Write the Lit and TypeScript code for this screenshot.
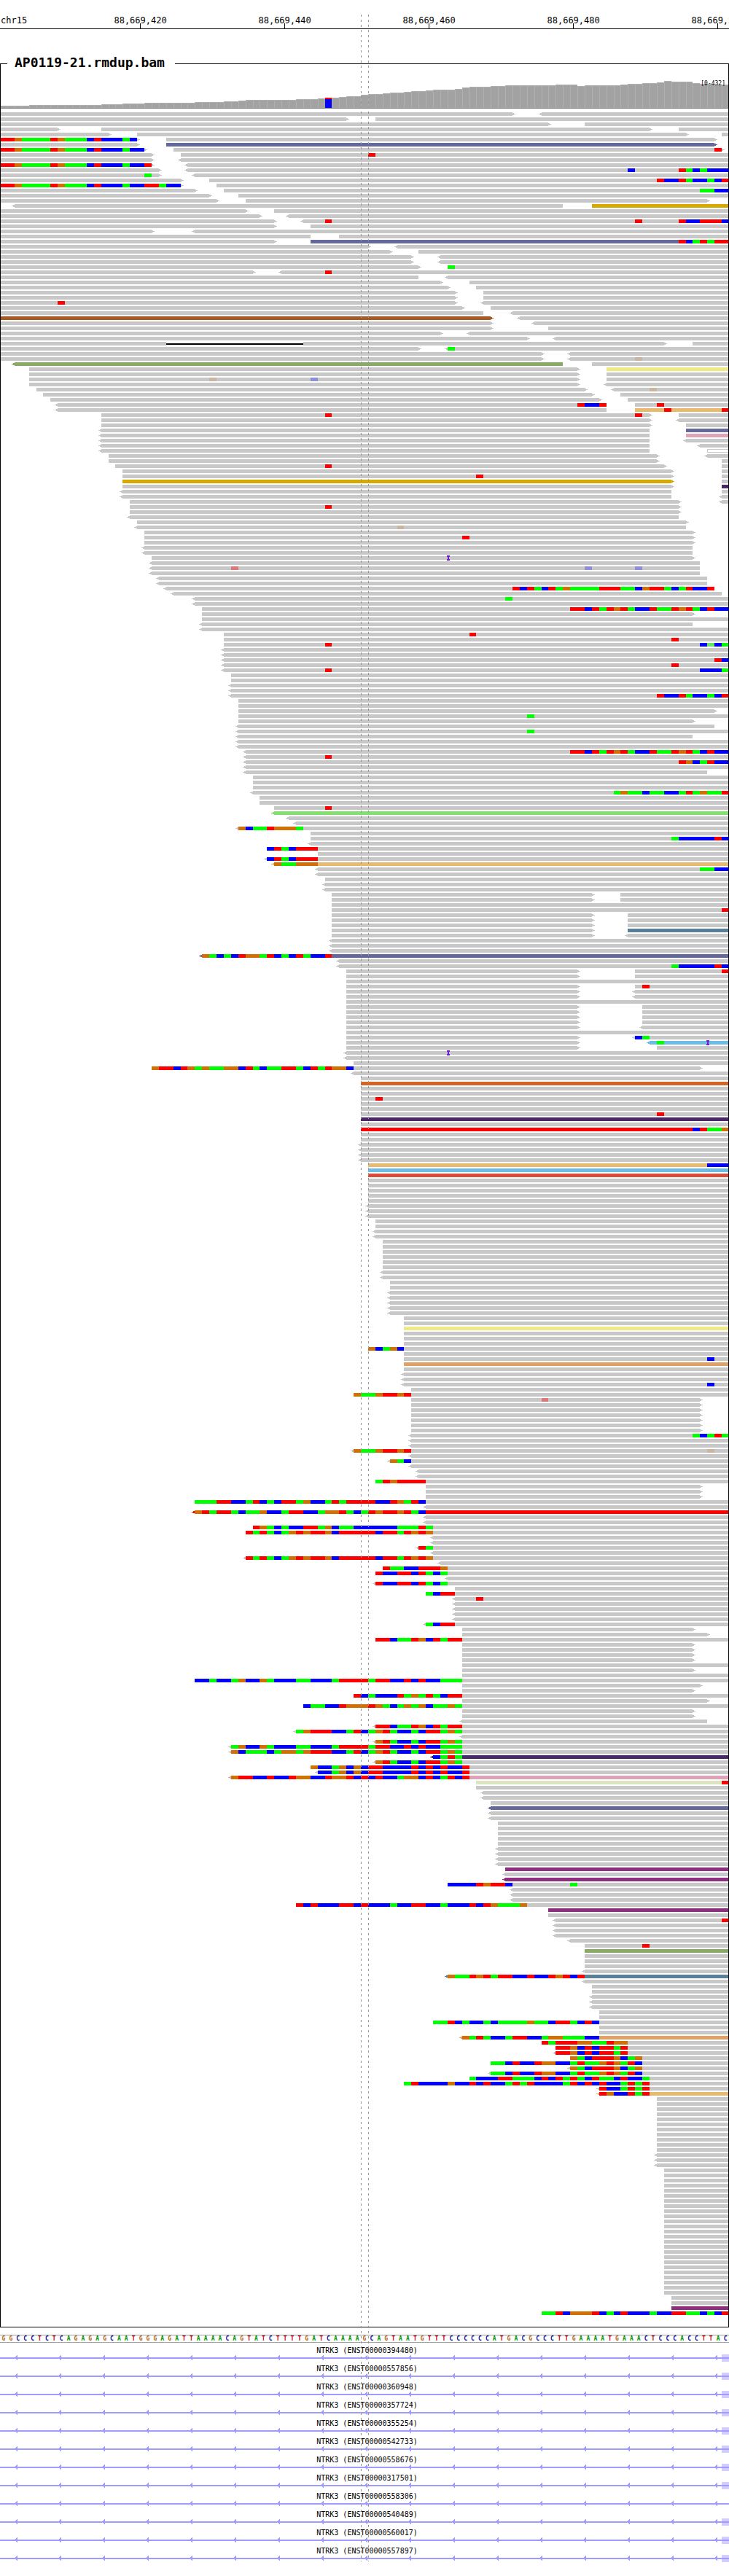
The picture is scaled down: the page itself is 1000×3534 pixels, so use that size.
import { LitElement, html, svg, css } from "lit";
import { customElement, property } from "lit/decorators.js";

const BASES = 101;
const SPAN = 1000;
const FIRST_POSITION = 88669401;

/** Left edge of base column k on a drawing SPAN units wide. */
const edge = (k: number) => Math.round((k * SPAN) / BASES);

/* ---------- data ---------- */

const TICKS = [19, 39, 59, 79, 99].map((base) => ({
  base,
  label: (FIRST_POSITION + base).toLocaleString("en-US"),
}));

const SEQUENCE =
  "GGCCCTCTCAGAGAGCAATGGGAGATTAAAACAGTATCTTTTGATCAAAAGCAGTAATGTTTCCCCCCATGACGCCCTTGAAAATGAAACTCCCACCTTAC";

const TRANSCRIPTS = [
  { id: "ENST00000394480", exon: true },
  { id: "ENST00000557856", exon: true },
  { id: "ENST00000360948", exon: true },
  { id: "ENST00000357724", exon: true },
  { id: "ENST00000355254", exon: true },
  { id: "ENST00000542733", exon: true },
  { id: "ENST00000558676", exon: true },
  { id: "ENST00000317501", exon: true },
  { id: "ENST00000558306", exon: false },
  { id: "ENST00000540489", exon: true },
  { id: "ENST00000560017", exon: true },
  { id: "ENST00000557897", exon: true },
];

/** Coverage as [number of bases, bar height]. */
const COVERAGE: [number, number][] = [
  [4, 3], [10, 4], [3, 5], [3, 6], [7, 7], [4, 8], [2, 9], [1, 10], [7, 11],
  [3, 12], [1, 13], [2, 14], [1, 15], [2, 16], [1, 18], [2, 19], [1, 20],
  [2, 21], [1, 22], [2, 23], [1, 24], [3, 25], [1, 26], [1, 28], [3, 29],
  [2, 30], [7, 31], [3, 32], [1, 30], [5, 31], [1, 32], [2, 33], [2, 34],
  [1, 35], [1, 37], [3, 36], [1, 34], [2, 33], [2, 32],
];
const VARIANT_BASE = 45;

/*
 * One lane per line, in base columns:
 *   [<]from-[to][>][*colour]  a read, with its strand tip; no end = runs off the view
 *   @n:ACGT                   mismatched or clipped bases from column n (lower case = low quality)
 *   !n  insertion     =a-b  deletion     xN  the lane is repeated N times
 */
const LANES = `
0-71> <75-
0-48> 52-
0-76> 81-
0-8> 14-90> 94-
0-15> 19-95> 100-
0-19> @0:TTGAAAATGAAACTCCCAC 23-99>
0-19> 23-99>*slate
0-20> @0:TTGAAAATGAAACTCCCACC 24-100> @99:T
0-21> 25- @51:T
0-21> <25-
0-21> @0:TTGAAAATGAAACTCCCACCT <26-
0-22> <26- @87:C @94:TACACCC
0-22> @20:A <27-
0-25> 29- @91:TCCTACCACT
0-25> @0:TTGAAAATGAAACTCCCACCTTACC 30-
0-27> 31- @97:AACC
0-29> 33-
0-30> 34-98>
<2-78 82-*gold
0-34> 38-
0-36> <40-
0-38> <42- @45:T @88:T @94:TCCTTTC
0-38> 43-
0-21> <27-
0-43 47-
0-38> 43-*slate @94:TCATATT
0-51> <55-
0-54> 58-
0-57> <61- x2
0-58> 62- @62:A
0-35> <39- @45:T
0-58 <62-
0-61> 65-
0-62> 66-
0-63> 67- x2
0-63> <67- @8:T
0-64> 68-
0-67 <71-
0-68>*brown <72-
0-68> <74-
0-68> 76-
0-61> <65-
0-73> <77-
0-23 =23-42 42-92> 96-
0-58> <62- @62:A
0-75> <79-
0-75> <79- @88:g
<2-78*green 82-
4-80> 84-*yellow
4-80> 84-
4-80> 84- @29:g @43:c
4-80> <84-
5-81> <85- @90:g
6-82> 86-
7-83> 87-
<8-84 @80:TCCT 88- @91:T
<8-84 88-*sand @92:T @100:T
14-90> 94- @45:T @88:T
14-90> <94-
14-90> 95-
<14-90 95-*slate
<14-90 95-*pink
<14-90 <95-
<14-90 <97-
<14-90 98-*hollow
15-91> <98-
15-91> 100-
16-92> 100- @45:T
17-93> 100-
17-93> 100- @66:T
17-93>*gold 100-
17-93> 100-*violet
<17-93 100-
<17-93 <100-
18-94> <100-
18-94> @45:T
18-94>
<18-94
19-95>
<19-95 @55:g
20-96>
20-96> @64:T
20-96>
<20-96 x2
21-96> !62
<21-97
<21-97 @32:t @81:c @88:c
<21-97
<22-98 x2
<23-99 @71:TCTACTAGAAAATTTAACGTTACATCCT
<24-100
<27- @70:A
<27-
28- @79:TTCTATGTACCTAATGTACTCC
28-96>
28-
<28-96
<28-
31- @65:T
31- @93:T
31- @45:T @97:CaCA
<31- x2
<31- @99:TC
<31- @93:T
<31- @45:T @97:CCCA
32- x2
<32- x2
<32- @91:TCCTACCACT
33- x2
33-99>
33- @73:A
33-96>
<33-99
<33- @73:A
<33-96
<33- x2
<34- @79:TTCTATGTACCTAATGTACTCC
<34- @45:T
<34- @94:TGCATCC
<34-
<34-98
35- x3
<35- @85:AGAACAACCATAGAAT
36- x2
38- @45:T
<38-*lime
<40-
<41-
<33- @33:GCAATGGGA
43-
43- @93:ACCCCCTC
<43-
37- @37:CTACTTT
44-
<37- @37:CTACTTT
<38-*sand @38:GAAGGG
<44- @97:AACC
<44-
45-
<45- x2
46-82> 86- x2
46-
46- @100:T
46-82> 87- x3
46-82> 87-*steel
46-82> <87-
<46- x3
<28-*slate @28:GACACTGGATCACTACCT
<47-
<47- @93:ACCCCCTC
48-80> 88- @100:T
48-80> 88-
48-
48-80> 88- @89:T
48-80> <88- x2
48-
48-80> 89- x4
48-80> <89-
48-
48-80> <88- @88:CA
48-80> <90-*sky @91:A !98
48-80> 91-
<48- !62
<48-
49-
21-97> @21:GTTCTGAGAAGGCTACAATTACTATGGC
<49-
50-
50-*orange
50- x2
50- @52:T
50- x2
50- @91:T
50-*violet
50-
50-*red @96:CTAAG
50- x2
<50- x4
51-*sand @98:CCC
51-*sky
51-*tomato
51- x5
<51- x3
52- x2
<52- x2
53- x6
<53- x2
54- x2
<54- x5
56- x2
56-*yellow
56- x3
51- @51:GCAGC
56-
56- @98:C
56-*tan
56-
<56- x2
<56- @98:C
57-
49- @49:GAAGTTGT
57-97> @75:t
57-97> x6
<57- @96:ACATA
<57- x2
<49- @49:GAAGTTGT @98:g
<57-
<54- @54:GAC
<57-
<58- x2
52- @52:ATGTTTT
59-97> x3
27- @27:AAATTCCATCACTTAGCCATATTTTCCTGATC
<59-
<27-*red @27:GTATTACAAGCCATTCCAGGTACATGTTGTAC
<59- x2
35- @35:TGACACCTTAGCAACCCCCCAAATA
34- @34:TATACAGTGTTGCTTTTTCTTATGTG
<60- x2
<58- @58:TA
<60-
<34- @34:TATACAGTGTTGCTTTTTCTTATGTG
<61-
53- @53:TAACCTTTG
52- @52:TCCTTCTACA
<62-
<52- @52:TCCTTCTACA
63-
59- @59:ACTT
<63- @66:T
<63- x4
<59- @59:ACTT
64-96>
64-98>
52- @52:TTCAATGCTATT
64-96> x4
64-
64-96>
64-
27- @27:CCACCAGCCGACCCAACCCATTTTATTCCTCTCCAAA
64-97>
64-96>
49- @49:TCACCCTAGATACTT
64-98>
42- @42:CAACCTGGGTGACAGAGCAAGA
64-96> x2
<64-98
<52- @52:TTCAATGCTATT
<41- @41:AGTTTCCATCAGTACCACTTAGA
<64-
<52- @52:GTACCACTTAGA
<32- @32:AGCCGACCCAACCCATTTTATTCCTCTCCAAA
<32- @32:GCAAACAGGAGTTTCCATCAGTACCACTTAGA
<60-*violet @60:CATA
<52- @52:GTACCACTTAGA
43- @43:GCCAGCGCTTCCCCTCTCTCCT
<44- @44:CCAGCGCTTCCCCTCTCTCCT
<32-*pink @32:GTTCCTCCTGGCCTGGTCTCTCCAGGCTCATCT
66-*mint @100:T
66-
<67- x2
68-
<68-*slate
<68- x2
69- x5
<69- x4
70-*magenta
<70-
<70-*magenta
62- @62:CCCCTGTTC @79:A
<71- x3
41- @41:TCTCCCTTCTCCCACCTTCCACCCTCTGAAAG
76-*magenta
76-
<77- @100:T
<77- x3
<79-
81- @89:T
81-*green
81- x3
<81-
<62-*steel @62:GAATGTATTCCTCCTGTCT
<81-
82- x2
<82- x3
83- x2
60- @60:AATCACCACAAAAGAACTTACTC
83- x2
<64-*tan @64:GATACCATTCCAGGAAACC
75- @75:TATTTGGAATGG
77- @77:TTGCTCTTAT
<77- @77:TTGCTCTTAT
79- @79:GACTTTGCAG
68- @68:AACTCCTGGCCATAAGTGATC
<79- @79:GACTTTGCAG
<68- @68:AACTCCTGGCCATAAGTGATC
65- @65:ACCCTTAAACTCTATACTAACTCCA
56- @56:ATCCCCGCCTCTCCATATCCCCATCTCTCCATAT
<83- @83:TCCATAT
<83-*sand @83:TGCCTAT
91- x11
<91- x3
92- x25
93- x2
93-*magenta
75- @75:AATCGGGTCACTCCCACCTTAACACT
`
  .trim()
  .split("\n")
  .flatMap((line) => {
    const m = line.match(/^(.*?) x(\d+)$/);
    return m ? Array<string>(Number(m[2])).fill(m[1]) : [line];
  });

const READ_COLORS: Record<string, string> = {
  plain: "#c8c8c8",
  slate: "#64689a",
  gold: "#d4aa00",
  brown: "#a65a22",
  green: "#89aa64",
  yellow: "#f0ea86",
  sand: "#e7ba70",
  pink: "#dea3b6",
  violet: "#4a276a",
  lime: "#82df70",
  steel: "#5a7f9b",
  sky: "#6dbce6",
  orange: "#d26426",
  red: "#ff0000",
  tomato: "#d94e3a",
  tan: "#dfa165",
  mint: "#dae5c2",
  magenta: "#8e2e7e",
  hollow: "#c8c8c8",
};

const BASE_COLORS: Record<string, string> = {
  A: "#00ff00",
  C: "#0000ff",
  G: "#d17105",
  T: "#ff0000",
  a: "#63e663",
  c: "#8e8edb",
  g: "#cbb59f",
  t: "#e07777",
};

/* ---------- drawing ---------- */

const PITCH = 7;
const THICK = 5;

const box = (x: number, y: number, w: number, h: number, fill: string) =>
  svg`<rect x=${x} y=${y} width=${w} height=${h} fill=${fill}></rect>`;

function drawRead(m: RegExpMatchArray, y: number) {
  const name = m[5] ?? "plain";
  const fill = READ_COLORS[name];
  const x0 = edge(Number(m[2]));
  const x1 = edge(m[3] ? Number(m[3]) : BASES);
  let d = `M${x0} ${y}H${x1}V${y + THICK}H${x0}Z`;
  if (m[1]) d += `M${x0 - 2} ${y + 1}h2v3h-2zM${x0 - 4} ${y + 2}h2v1h-2z`;
  if (m[4]) d += `M${x1} ${y + 1}h2v3h-2zM${x1 + 2} ${y + 2}h2v1h-2z`;
  return svg`<path d=${d} fill=${fill}></path>${
    name === "hollow" ? box(x0 + 1, y + 1, x1 - x0, THICK - 2, "#ffffff") : null
  }`;
}

function drawBases(start: number, letters: string, y: number) {
  const runs = letters.match(/(.)\1*/g) ?? [];
  let k = start;
  return runs.map((run) => {
    const x = edge(k);
    k += run.length;
    return box(x, y, edge(k) - x, THICK, BASE_COLORS[run[0]]);
  });
}

function drawToken(token: string, y: number) {
  const read = token.match(/^(<?)(\d+)-(\d*)(>?)(?:\*(\w+))?$/);
  if (read) return drawRead(read, y);
  if (token[0] === "@") {
    const [k, letters] = token.slice(1).split(":");
    return drawBases(Number(k), letters, y);
  }
  if (token[0] === "!") {
    const x = edge(Number(token.slice(1)));
    return svg`<path fill="#7319d8" d="M${x - 1} ${y - 1}h4v2h-1v3h1v2h-4v-2h1v-3h-1z"></path>`;
  }
  const [a, b] = token.slice(1).split("-").map(Number);
  return box(edge(a), y + 2, edge(b) - edge(a), 2, "#000000");
}

/* ---------- elements ---------- */

@customElement("genome-ruler")
export class GenomeRuler extends LitElement {
  static styles = css`
    :host {
      display: block;
    }
    .ruler {
      display: grid;
      grid-template-columns: repeat(101, minmax(0, 1fr));
      padding-top: 21px;
      border-bottom: 1px solid #000;
      font-size: 12px;
      line-height: 14px;
      white-space: nowrap;
      overflow: hidden;
    }
    .chrom,
    .mark {
      grid-row: 1;
    }
    .chrom {
      padding-left: 1px;
    }
    .mark {
      display: flex;
      flex-direction: column;
      align-items: center;
      margin-right: 1px;
    }
    .tick {
      width: 1px;
      height: 7px;
      margin-top: -3px;
      background: #000;
    }
  `;

  render() {
    return html`<div class="ruler">
      <span class="chrom">chr15</span>
      ${TICKS.map(
        (t) => html`<span class="mark" style="grid-column:${t.base + 1}"
          ><span>${t.label}</span><span class="tick"></span
        ></span>`
      )}
    </div>`;
  }
}

@customElement("coverage-plot")
export class CoveragePlot extends LitElement {
  static styles = css`
    :host {
      display: block;
      position: relative;
    }
    svg {
      display: block;
      width: 100%;
      height: 48px;
    }
    .range {
      position: absolute;
      top: 9px;
      right: 4px;
      font-size: 8px;
      line-height: 10px;
    }
  `;

  render() {
    const floor = 47;
    const heights = COVERAGE.flatMap(([n, h]) => Array<number>(n).fill(h));
    return html`<svg viewBox="1 0 998 48" preserveAspectRatio="none" shape-rendering="crispEdges">
        ${heights.map((h, k) => {
          const x = edge(k);
          const w = edge(k + 1) - x;
          const y = floor - h;
          if (k === VARIANT_BASE)
            return [box(x, y, w, 2, "#ff0000"), box(x, y + 2, w, h - 2, "#0000ff")];
          return [box(x, y, w, h, "#b0b0b0"), box(x + 1, y + 1, w - 1, h - 1, "#a2a2a2")];
        })}
        ${box(0, floor, SPAN, 1, "#808080")}
      </svg>
      <span class="range">[0-432]</span>`;
  }
}

@customElement("read-pileup")
export class ReadPileup extends LitElement {
  static styles = css`
    :host {
      display: block;
    }
    svg {
      display: block;
      width: 100%;
    }
  `;

  render() {
    const height = LANES.length * PITCH;
    return html`<svg
      height=${height}
      viewBox="1 0 998 ${height}"
      preserveAspectRatio="none"
      shape-rendering="crispEdges"
    >
      ${LANES.map((lane, i) => lane.split(" ").map((token) => drawToken(token, i * PITCH)))}
    </svg>`;
  }
}

@customElement("sequence-strip")
export class SequenceStrip extends LitElement {
  static styles = css`
    :host {
      display: block;
    }
    .strip {
      display: grid;
      grid-template-columns: repeat(101, minmax(0, 1fr));
      border-top: 1px solid #a0a0a0;
      border-bottom: 1px solid #a0a0a0;
      font-size: 8px;
      font-weight: bold;
      line-height: 9px;
      text-align: center;
    }
    .A {
      color: #009600;
    }
    .C {
      color: #000096;
    }
    .G {
      color: #b06414;
    }
    .T {
      color: #b40010;
    }
  `;

  render() {
    return html`<div class="strip">
      ${[...SEQUENCE].map((b) => html`<span class=${b}>${b}</span>`)}
    </div>`;
  }
}

@customElement("gene-transcript")
export class GeneTranscript extends LitElement {
  @property() name = "";
  @property({ type: Boolean }) exon = false;

  static styles = css`
    :host {
      display: block;
    }
    .label {
      padding-left: 7px;
      font-size: 10px;
      line-height: 11px;
      text-align: center;
    }
    svg {
      display: block;
      width: 100%;
      height: 9px;
      overflow: visible;
    }
  `;

  render() {
    const arrows = Array.from(
      { length: 17 },
      (_, i) => `M${23 + 60 * i} 1h1v7h-1zM${22 + 60 * i} 2h1v5h-1zM${21 + 60 * i} 3h1v3h-1z`
    ).join("");
    return html`<div class="label">${this.name}</div>
      <svg viewBox="0 0 1000 9" preserveAspectRatio="none" shape-rendering="crispEdges">
        ${this.exon ? box(edge(100), 0, 10, 10, "#d2ccff") : null}
        <path fill="#a09bff" d="M0 4H1000V6H0Z${arrows}"></path>
      </svg>`;
  }
}

@customElement("app-root")
export class AppRoot extends LitElement {
  static styles = css`
    :host {
      display: block;
      background: #fff;
      color: #000;
      font-family: "DejaVu Sans Mono", "Liberation Mono", monospace;
    }
    .viewer {
      position: relative;
      padding-bottom: 20px;
      overflow: hidden;
    }
    .track {
      min-width: 0;
      margin: 34px 0 0;
      padding: 0 0 14px;
      border: 1px solid #000;
    }
    .title {
      margin-left: 9px;
      padding: 0 14px 4px 10px;
      font-size: 18px;
      font-weight: bold;
      line-height: 23px;
    }
    .reads {
      margin-top: 5px;
    }
    .sequence {
      margin-top: 10px;
    }
    .genes {
      display: flex;
      flex-direction: column;
      gap: 5px;
      padding-top: 5px;
    }
    .guide {
      position: absolute;
      top: 20px;
      bottom: 20px;
      width: 1px;
      background: repeating-linear-gradient(#969696 0 3px, transparent 3px 7px);
    }
    .guide.from {
      left: calc(100% * 50 / 101);
    }
    .guide.to {
      left: calc(100% * 51 / 101);
    }
  `;

  render() {
    return html`<main class="viewer">
      <genome-ruler></genome-ruler>
      <fieldset class="track">
        <legend class="title">AP0119-21.rmdup.bam</legend>
        <coverage-plot></coverage-plot>
        <read-pileup class="reads"></read-pileup>
      </fieldset>
      <sequence-strip class="sequence"></sequence-strip>
      <div class="genes">
        ${TRANSCRIPTS.map(
          (t) => html`<gene-transcript .name=${`NTRK3 (${t.id})`} ?exon=${t.exon}></gene-transcript>`
        )}
      </div>
      <div class="guide from"></div>
      <div class="guide to"></div>
    </main>`;
  }
}
